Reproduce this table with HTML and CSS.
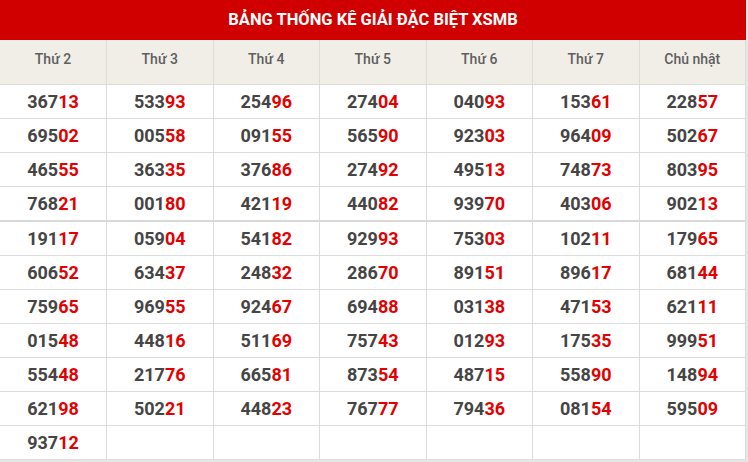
FILE: index.html
```html
<!DOCTYPE html>
<html lang="vi">
<head>
<meta charset="utf-8">
<link rel="stylesheet" href="styles.css">
</head>
<body>
<div class="board">
  <div class="title">BẢNG THỐNG KÊ GIẢI ĐẶC BIỆT XSMB</div>
  <table class="grid">
    <thead>
      <tr><th>Thứ 2</th><th>Thứ 3</th><th>Thứ 4</th><th>Thứ 5</th><th>Thứ 6</th><th>Thứ 7</th><th>Chủ nhật</th></tr>
    </thead>
    <tbody>
      <tr><td>367<b>13</b></td><td>533<b>93</b></td><td>254<b>96</b></td><td>274<b>04</b></td><td>040<b>93</b></td><td>153<b>61</b></td><td>228<b>57</b></td></tr>
      <tr><td>695<b>02</b></td><td>005<b>58</b></td><td>091<b>55</b></td><td>565<b>90</b></td><td>923<b>03</b></td><td>964<b>09</b></td><td>502<b>67</b></td></tr>
      <tr><td>465<b>55</b></td><td>363<b>35</b></td><td>376<b>86</b></td><td>274<b>92</b></td><td>495<b>13</b></td><td>748<b>73</b></td><td>803<b>95</b></td></tr>
      <tr class="sep"><td>768<b>21</b></td><td>001<b>80</b></td><td>421<b>19</b></td><td>440<b>82</b></td><td>939<b>70</b></td><td>403<b>06</b></td><td>902<b>13</b></td></tr>
      <tr><td>191<b>17</b></td><td>059<b>04</b></td><td>541<b>82</b></td><td>929<b>93</b></td><td>753<b>03</b></td><td>102<b>11</b></td><td>179<b>65</b></td></tr>
      <tr><td>606<b>52</b></td><td>634<b>37</b></td><td>248<b>32</b></td><td>286<b>70</b></td><td>891<b>51</b></td><td>896<b>17</b></td><td>681<b>44</b></td></tr>
      <tr><td>759<b>65</b></td><td>969<b>55</b></td><td>924<b>67</b></td><td>694<b>88</b></td><td>031<b>38</b></td><td>471<b>53</b></td><td>621<b>11</b></td></tr>
      <tr><td>015<b>48</b></td><td>448<b>16</b></td><td>511<b>69</b></td><td>757<b>43</b></td><td>012<b>93</b></td><td>175<b>35</b></td><td>999<b>51</b></td></tr>
      <tr><td>554<b>48</b></td><td>217<b>76</b></td><td>665<b>81</b></td><td>873<b>54</b></td><td>487<b>15</b></td><td>558<b>90</b></td><td>148<b>94</b></td></tr>
      <tr><td>621<b>98</b></td><td>502<b>21</b></td><td>448<b>23</b></td><td>767<b>77</b></td><td>794<b>36</b></td><td>081<b>54</b></td><td>595<b>09</b></td></tr>
      <tr><td>937<b>12</b></td><td></td><td></td><td></td><td></td><td></td><td></td></tr>
    </tbody>
  </table>
</div>
</body>
</html>
```

FILE: styles.css
```css
html, body {
  margin: 0;
  padding: 0;
}
body {
  background: #e6e6e6;
  font-family: Roboto, "Liberation Sans", Arial, sans-serif;
  width: 748px;
  height: 462px;
  overflow: hidden;
}
.board {
  width: 746px;
  background: #fff;
}
.title {
  height: 40px;
  line-height: 40px;
  background: #d10000;
  color: #fff;
  font-weight: 700;
  font-size: 16.5px;
  text-align: center;
}
.grid {
  width: 746px;
  border-collapse: collapse;
  table-layout: fixed;
}
.grid th, .grid td {
  border: 1px solid #dcdcdc;
  text-align: center;
  padding: 0;
}
.grid tr > :first-child { border-left: none; }
.grid th {
  height: 44px;
  box-sizing: border-box;
  padding-bottom: 6px;
  background: #f1eee8;
  color: #5e5e5e;
  font-weight: 500;
  font-size: 14px;
  border-top: none;
}
.grid td {
  height: 33px;
  color: #454545;
  font-weight: 700;
  font-size: 18px;
}
.grid td b {
  color: #e30000;
  font-weight: 700;
}
.grid tr.sep td {
  border-bottom: 2px solid #d8d8d8;
}
```
